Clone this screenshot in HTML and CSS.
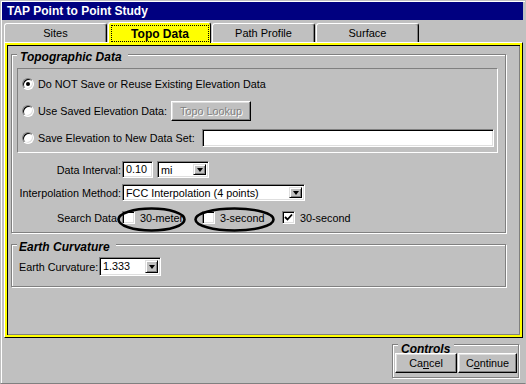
FILE: index.html
```html
<!DOCTYPE html>
<html lang="en">

<head>
    <meta charset="UTF-8">
    <meta name="viewport" content="width=device-width, initial-scale=1.0">
    <title>TAP Point to Point Study</title>
    <link rel="stylesheet" href="styles.css">
</head>

<body>
    <div class="window">
        <div class="titlebar">TAP Point to Point Study</div>

        <div class="tabs">
            <div class="tab">Sites</div>
            <div class="tab active"><span class="focus">Topo Data</span></div>
            <div class="tab">Path Profile</div>
            <div class="tab">Surface</div>
        </div>

        <div class="panel">
            <fieldset class="group topo">
                <legend><span>Topographic Data</span></legend>

                <div class="options">
                    <div class="option">
                        <span class="radio checked"></span>
                        <span>Do NOT Save or Reuse Existing Elevation Data</span>
                    </div>
                    <div class="option">
                        <span class="radio"></span>
                        <span class="opt-label saved">Use Saved Elevation Data:</span>
                        <button class="btn lookup" disabled>Topo Lookup</button>
                    </div>
                    <div class="option">
                        <span class="radio"></span>
                        <span class="opt-label newset">Save Elevation to New Data Set:</span>
                        <span class="field dataset"></span>
                    </div>
                </div>

                <div class="params">
                    <span class="label">Data Interval:</span>
                    <div class="row">
                        <span class="field interval">0.10</span>
                        <span class="combo units"><span class="value">mi</span><span class="drop"></span></span>
                    </div>

                    <span class="label">Interpolation Method:</span>
                    <div class="row">
                        <span class="combo method"><span class="value">FCC Interpolation (4 points)</span><span class="drop"></span></span>
                    </div>

                    <span class="label search">Search Data</span>
                    <div class="row checks">
                        <span class="check first">
                            <span class="box"></span>30-meter
                            <svg class="ring" width="69" height="25" viewBox="0 0 69 25">
                                <ellipse cx="34.5" cy="12.5" rx="33" ry="11" />
                            </svg>
                        </span>
                        <span class="check second">
                            <span class="box"></span>3-second
                            <svg class="ring" width="81" height="25" viewBox="0 0 81 25">
                                <ellipse cx="40.5" cy="12.5" rx="39" ry="11" />
                            </svg>
                        </span>
                        <span class="check">
                            <span class="box">
                                <svg width="9" height="9" viewBox="0 0 9 9">
                                    <polyline points="1,4 3.5,6.5 8,1.5" />
                                </svg>
                            </span>30-second
                        </span>
                    </div>
                </div>
            </fieldset>

            <fieldset class="group earth">
                <legend><span>Earth Curvature</span></legend>
                <div class="earth-row">
                    <span class="earth-label">Earth Curvature:</span>
                    <span class="combo curvature"><span class="value">1.333</span><span class="drop"></span></span>
                </div>
            </fieldset>
        </div>

        <div class="footer">
            <fieldset class="group controls">
                <legend><span>Controls</span></legend>
                <div class="buttons">
                    <button class="btn cancel">Ca<u>n</u>cel</button>
                    <button class="btn continue">C<u>o</u>ntinue</button>
                </div>
            </fieldset>
        </div>
    </div>
</body>

</html>
```

FILE: styles.css
```css
body {
    margin: 0;
    background-color: #c0c0c0;
    font-family: 'Liberation Sans', Arial, sans-serif;
    font-size: 10.8px;
    color: #000;
}

.window {
    width: 526px;
    height: 384px;
    box-sizing: border-box;
    border: 1px solid #c0c0c0;
    border-bottom-color: #808080;
    padding: 1px 2px 1px 1px;
    box-shadow: inset 1px 1px 0 #fff;
    display: flex;
    flex-direction: column;
}

.titlebar {
    height: 18px;
    line-height: 18px;
    background-color: #000080;
    color: #fff;
    font-weight: bold;
    font-size: 12px;
    padding-left: 5px;
}

/* tab strip */
.tabs {
    height: 22px;
    display: flex;
    align-items: flex-end;
    gap: 1px;
    padding-left: 2px;
}

.tab {
    width: 103px;
    height: 19px;
    box-sizing: border-box;
    border-top: 1px solid #fff;
    border-left: 1px solid #fff;
    border-right: 1px solid #000;
    border-radius: 3px 3px 0 0;
    box-shadow: inset -1px 0 0 #808080;
    display: flex;
    align-items: center;
    justify-content: center;
    font-size: 11px;
}

.tab.active {
    height: 21px;
    margin-bottom: -1px;
    position: relative;
    z-index: 1;
    background-color: #ffff00;
    font-weight: bold;
    font-size: 12px;
    align-items: stretch;
    box-shadow: none;
}

.focus {
    flex: 1;
    margin: 2px 1px 1px 2px;
    border: 1px dotted #000;
    display: flex;
    align-items: center;
    justify-content: center;
}

/* tab page */
.panel {
    width: 519px;
    height: 296px;
    box-sizing: border-box;
    margin-left: 2px;
    border: 1px solid;
    border-color: #fff #000 #000 #fff;
    box-shadow: inset 0 0 0 2px #ffff00, inset 3px 3px 0 #000, inset -3px -3px 0 #808080;
    padding: 2px 0 0 6px;
}

/* etched group boxes */
.group {
    margin: 0;
    padding: 0;
    border: 1px solid #808080;
    box-shadow: inset 1px 1px 0 #fff, 1px 1px 0 #fff;
}

.group legend {
    padding: 6px 0 0 0;
    line-height: 12px;
    font-size: 12px;
    font-weight: bold;
    font-style: italic;
    background-color: #c0c0c0;
    background-clip: content-box;
}

.group legend span {
    display: inline-block;
    padding: 0 6px 0 3px;
}

.topo {
    width: 495px;
    box-sizing: border-box;
    padding: 5px 0 6px 5px;
}

.options {
    width: 481px;
    box-sizing: border-box;
    border: 1px solid;
    border-color: #808080 #fff #fff #808080;
    padding: 1px 3px 1px 4px;
}

.option {
    height: 27px;
    display: flex;
    align-items: center;
    white-space: nowrap;
}

.radio {
    width: 12px;
    height: 12px;
    box-sizing: border-box;
    border-radius: 50%;
    border: 1px solid;
    border-color: #808080 #fff #fff #808080;
    background-color: #fff;
    box-shadow: inset 1px 1px 0 #000, inset -1px -1px 0 #dfdfdf;
    margin-right: 4px;
    display: flex;
    align-items: center;
    justify-content: center;
    flex-shrink: 0;
}

.radio.checked::after {
    content: '';
    width: 4px;
    height: 4px;
    border-radius: 50%;
    background-color: #000;
}

.opt-label {
    flex-shrink: 0;
}

.saved {
    width: 133px;
}

.newset {
    width: 164px;
}

.btn {
    font: inherit;
    color: #000;
    background-color: #c0c0c0;
    border: 1px solid;
    border-color: #fff #000 #000 #fff;
    box-shadow: inset -1px -1px 0 #808080, inset 1px 1px 0 #dfdfdf;
    padding: 0;
    height: 20px;
}

.btn:disabled {
    color: #808080;
    text-shadow: 1px 1px 0 #fff;
}

.lookup {
    width: 80px;
}

/* sunken white fields */
.field,
.combo,
.box {
    box-sizing: border-box;
    background-color: #fff;
    border: 1px solid;
    border-color: #808080 #fff #fff #808080;
    box-shadow: inset 1px 1px 0 #000, inset -1px -1px 0 #dfdfdf;
}

.field {
    height: 17px;
    padding: 1px 3px;
    line-height: 13px;
}

.dataset {
    width: 293px;
    height: 18px;
}

.params {
    display: grid;
    grid-template-columns: 104px auto;
    column-gap: 1px;
    row-gap: 6px;
    margin-top: 8px;
    align-items: center;
}

.label {
    text-align: right;
    white-space: nowrap;
}

.label.search {
    padding-right: 4px;
    margin-top: 2px;
}

.row {
    height: 17px;
    display: flex;
    align-items: center;
}

.row.checks {
    margin-top: 2px;
}

.interval {
    width: 31px;
}

.combo {
    height: 17px;
    display: flex;
    padding: 2px;
}

.combo .value {
    flex: 1;
    padding-left: 1px;
    line-height: 13px;
    white-space: nowrap;
}

.drop {
    width: 13px;
    box-sizing: border-box;
    background-color: #c0c0c0;
    border: 1px solid;
    border-color: #dfdfdf #000 #000 #dfdfdf;
    box-shadow: inset 1px 1px 0 #fff, inset -1px -1px 0 #808080;
    display: flex;
    align-items: center;
    justify-content: center;
}

.drop::after {
    content: '';
    border-top: 4px solid #000;
    border-left: 3.5px solid transparent;
    border-right: 3.5px solid transparent;
}

.units {
    width: 52px;
    margin-left: 4px;
}

.method {
    width: 183px;
}

.check {
    width: 80px;
    display: flex;
    align-items: center;
    gap: 5px;
    position: relative;
    white-space: nowrap;
}

.box {
    width: 13px;
    height: 13px;
    display: flex;
    align-items: center;
    justify-content: center;
}

.box polyline {
    fill: none;
    stroke: #000;
    stroke-width: 1.8;
}

/* hand-drawn annotation rings */
.ring {
    position: absolute;
    top: -4px;
    left: -5px;
}

.second .ring {
    left: -8px;
}

.ring ellipse {
    fill: none;
    stroke: #000;
    stroke-width: 2.6;
}

.earth {
    width: 495px;
    box-sizing: border-box;
    margin-top: 2px;
    padding: 4px 0 10px 7px;
}

.earth legend {
    margin-left: -2px;
}

.earth legend span {
    padding-left: 2px;
}

.earth-row {
    display: flex;
    align-items: center;
}

.earth-label {
    width: 80px;
    white-space: nowrap;
}

.curvature {
    width: 62px;
    height: 19px;
}

/* bottom control strip */
.footer {
    flex: 1;
    display: flex;
    justify-content: flex-end;
    align-items: flex-start;
    padding-right: 4px;
}

.controls {
    width: 127px;
    box-sizing: border-box;
    margin-top: -5px;
    padding: 0 1px 4px 2px;
}

.controls legend {
    padding-top: 10px;
    margin-left: 3px;
}

.controls legend span {
    padding: 0 4px 0 3px;
}

.buttons {
    display: flex;
    gap: 1px;
    margin-top: -2px;
}

.cancel {
    width: 62px;
}

.continue {
    width: 59px;
}
```
